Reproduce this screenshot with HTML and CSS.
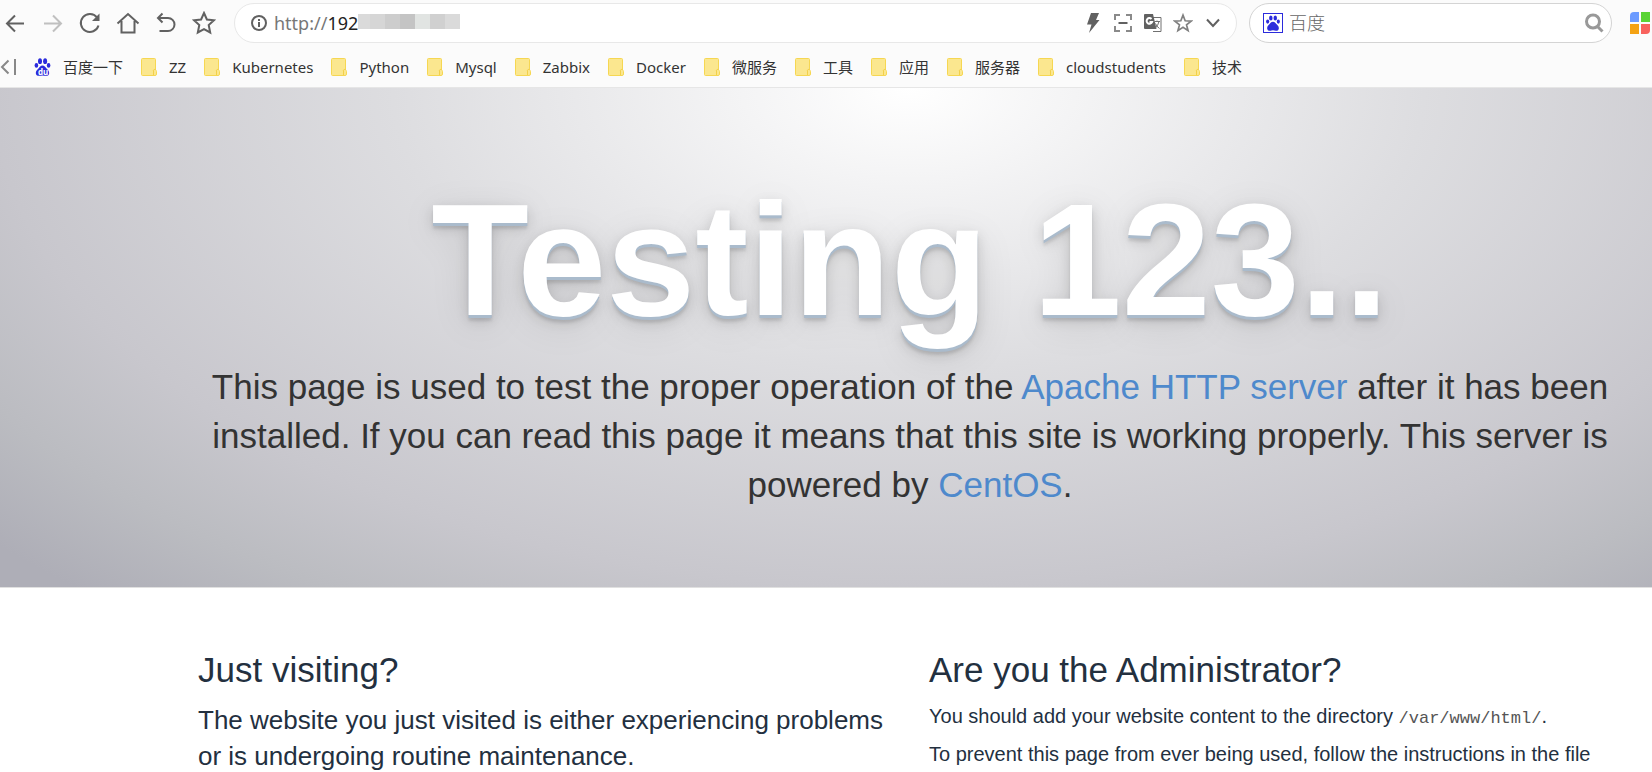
FILE: index.html
```html
<!DOCTYPE html>
<html lang="en">
<head>
<meta charset="utf-8">
<title>Apache HTTP Server Test Page powered by CentOS</title>
<link rel="stylesheet" href="styles.css">
</head>
<body>
<svg class="defs" aria-hidden="true">
  <symbol id="folder" viewBox="0 0 16 18"><path d="M.5 1.500a1 1 0 0 1 1-1h12a1 1 0 0 1 1 1v10.500a1.500 1.500 0 0 1 1 1.500v2.500a1.500 1.500 0 0 1-1.500 1.500H1.500a1 1 0 0 1-1-1z" fill="#fbe78f" stroke="#f6d752"/><path d="M12.500 17v-4a1 1 0 0 1 2-1" fill="none" stroke="#f3d04a"/></symbol>
  <symbol id="paw" viewBox="0 0 16 18"><g fill="currentColor"><ellipse cx="5.500" cy="3.200" rx="2" ry="2.900"/><ellipse cx="10.600" cy="3.200" rx="2" ry="2.900"/><ellipse cx="1.900" cy="7.400" rx="1.800" ry="2.400"/><ellipse cx="14.100" cy="7.400" rx="1.800" ry="2.400"/><path d="M8 7.500c2 0 2.800 1.500 3.800 2.700 1.200 1.300 2.900 2.400 2.900 4.700 0 2-1.500 3-3.400 2.900-1.200-.1-2.100-.4-3.300-.4s-2.100.3-3.300.4c-1.900.1-3.400-.9-3.400-2.900 0-2.300 1.700-3.400 2.900-4.700C5.200 9 6 7.500 8 7.500z"/></g></symbol>
</svg>
<header class="chrome">
  <div class="toolbar">
    <nav class="controls" aria-label="Navigation">
      <button class="tool" aria-label="Back"><svg width="24" height="24" viewBox="0 0 24 24"><path d="M22 12.500H6M13 4.500l-8 8 8 8"/></svg></button>
      <button class="tool faded" aria-label="Forward"><svg width="24" height="24" viewBox="0 0 24 24"><path d="M4 12.500h16M13 4.500l8 8-8 8"/></svg></button>
      <button class="tool" aria-label="Reload"><svg width="24" height="24" viewBox="0 0 24 24"><path d="M19 6.500A9 9 0 1 0 20.500 14.500"/><path class="head" d="M21.500 2.500V10H14z"/></svg></button>
      <button class="tool" aria-label="Home"><svg width="24" height="24" viewBox="0 0 24 24"><path d="M1.500 12.500 12 3l10.500 9.500M5.500 10v11.500h13V10"/></svg></button>
      <button class="tool" aria-label="Restore"><svg width="24" height="24" viewBox="0 0 24 24"><path d="M8.500 2.500 4 7l4.500 4.500M4 7h10a6.500 6.500 0 0 1 0 13H5.500"/></svg></button>
      <button class="tool" aria-label="Favorites"><svg width="24" height="24" viewBox="0 0 24 24"><path d="m12 2 2.900 6.500 7 .8-5.200 4.700 1.500 7.500L12 18.100l-6.200 3.400L7.300 14 2.100 9.300l7-.8z"/></svg></button>
    </nav>
    <div class="address">
      <svg width="18" height="18" viewBox="0 0 18 18" class="info"><circle cx="9" cy="9" r="7"/><path d="M9 8v5M9 5v2"/></svg>
      <label class="url"><span class="scheme">http://</span><input value="192" aria-label="Address"></label>
      <span class="mask" aria-hidden="true"><i class="m1"></i><i class="m2"></i><i class="m3"></i><i class="m4"></i><i class="m5"></i><i class="m6"></i><i class="m7"></i></span>
      <div class="actions">
        <button aria-label="Speed mode"><svg width="20" height="20" viewBox="0 0 20 20"><path class="solid" d="M8 0h8l-3 7h3.500L6 20l2.500-8.500H4z"/></svg></button>
        <button aria-label="Screenshot"><svg width="20" height="20" viewBox="0 0 20 20"><path class="thin" d="M2 7V2h5M13 2h5v5M18 13v5h-5M7 18H2v-5"/><path d="M5.500 10h9"/></svg></button>
        <button aria-label="Translate"><svg width="20" height="20" viewBox="0 0 20 20"><path d="M8 4.500h10v14h-8" class="hair"/><path class="solid" d="M2 1h8l3.500 15H2a1 1 0 0 1-1-1V2a1 1 0 0 1 1-1z"/><path d="M8.500 6A2.800 2.800 0 1 0 9 9H6.500" stroke="#fff" class="line"/><path class="hair" d="M11.500 8.500H17M14 7.500v1M16 8.500q-1 4.500-4 7M12.500 10.500q1 3 4 5"/></svg></button>
        <button aria-label="Bookmark"><svg width="20" height="20" viewBox="0 0 24 24"><path d="m12 2.500 2.600 6.800 7.200.4-5.600 4.500 1.900 7L12 17.200l-6.100 4 1.900-7-5.600-4.500 7.200-.4z" class="star"/></svg></button>
        <button aria-label="More"><svg width="20" height="20" viewBox="0 0 20 20"><path d="m4 6.500 6 6.500 6-6.500"/></svg></button>
      </div>
    </div>
    <div class="search">
      <span class="engine"><svg width="14" height="16"><use href="#paw"/></svg></span>
      <input placeholder="百度" aria-label="Search">
      <button aria-label="Search"><svg width="20" height="20" viewBox="0 0 20 20"><circle cx="9" cy="8.500" r="6.500"/><path d="m13.500 13.500 5 5"/></svg></button>
    </div>
    <button class="apps" aria-label="Extensions"><i class="blue"></i><i class="green"></i><i class="orange"></i><i class="red"></i></button>
  </div>
  <nav class="bookmarks" aria-label="Bookmarks">
    <button class="collapse" aria-label="Collapse bookmarks"><svg width="16" height="18" viewBox="0 0 16 18"><path d="M8.500 2.500 2 9l6.500 6.500M15 1v16"/></svg></button>
    <a href="#"><span class="baidu"><svg width="17" height="18" viewBox="0 0 17 18"><use href="#paw" width="17" height="18"/></svg><b>du</b></span>百度一下</a>
    <a href="#"><svg width="16" height="18"><use href="#folder"/></svg>ZZ</a>
    <a href="#"><svg width="16" height="18"><use href="#folder"/></svg>Kubernetes</a>
    <a href="#"><svg width="16" height="18"><use href="#folder"/></svg>Python</a>
    <a href="#"><svg width="16" height="18"><use href="#folder"/></svg>Mysql</a>
    <a href="#"><svg width="16" height="18"><use href="#folder"/></svg>Zabbix</a>
    <a href="#"><svg width="16" height="18"><use href="#folder"/></svg>Docker</a>
    <a href="#"><svg width="16" height="18"><use href="#folder"/></svg>微服务</a>
    <a href="#"><svg width="16" height="18"><use href="#folder"/></svg>工具</a>
    <a href="#"><svg width="16" height="18"><use href="#folder"/></svg>应用</a>
    <a href="#"><svg width="16" height="18"><use href="#folder"/></svg>服务器</a>
    <a href="#"><svg width="16" height="18"><use href="#folder"/></svg>cloudstudents</a>
    <a href="#"><svg width="16" height="18"><use href="#folder"/></svg>技术</a>
  </nav>
</header>
<main>
  <section class="hero">
    <div class="container">
      <h1>Testing 123..</h1>
      <p>This page is used to test the proper operation of the <a href="#">Apache HTTP server</a> after it has been installed. If you can read this page it means that this site is working properly. This server is powered by <a href="#">CentOS</a>.</p>
    </div>
  </section>
  <section class="container columns">
    <article>
      <h2>Just visiting?</h2>
      <p class="lead">The website you just visited is either experiencing problems or is undergoing routine maintenance.</p>
    </article>
    <article>
      <h2>Are you the Administrator?</h2>
      <p>You should add your website content to the directory <code>/var/www/html/</code>.</p>
      <p>To prevent this page from ever being used, follow the instructions in the file</p>
    </article>
  </section>
</main>
</body>
</html>
```
FILE: styles.css
```css
* { box-sizing: border-box; }
body { margin: 0; background: #fff; color: #23303f; font-family: "Liberation Sans", Arial, sans-serif; }
a { text-decoration: none; }
button { padding: 0; border: 0; background: none; display: flex; flex: none; }
input { min-width: 0; padding: 0; border: 0; background: none; outline: 0; font: inherit; color: inherit; }
svg { display: block; flex: none; fill: none; stroke: #616161; stroke-width: 2; }
.defs { position: absolute; width: 0; height: 0; }
symbol { stroke-width: 1; }

.chrome { background: #fbfbfb; border-bottom: 1px solid #e6e6e6; font-family: "Noto Sans", "Noto Sans CJK SC", sans-serif; }
.toolbar { display: flex; align-items: center; height: 46px; padding: 0 2px; }
.controls { display: flex; gap: 14px; width: 232px; flex: none; }
.tool .head { fill: #616161; stroke: none; }
.faded svg { stroke: #c0c0c0; }
.address, .search { display: flex; align-items: center; height: 40px; border-radius: 20px; background: #fff; }
.address { flex: 1; border: 1px solid #e8e8e8; padding: 0 13px 0 15px; }
.url { display: flex; align-items: center; margin-left: 6px; font-size: 18px; }
.url input { width: 31px; color: #222; }
.scheme { color: #777; }
.mask { display: flex; height: 15px; margin-bottom: 4px; }
.mask i { width: 15px; }
.mask .m1 { width: 12px; background: #dadada; }
.m2 { background: #d6d6d6; }
.m3 { background: #cdcdcd; }
.m4 { background: #c4c4c4; }
.m5 { background: #e1e4e2; }
.m6 { background: #d0d0d0; }
.m7 { background: #dadada; }
.actions { display: flex; gap: 10px; margin-left: auto; }
.actions .solid { fill: #616161; stroke: none; }
.actions .thin { stroke: #8a8a8a; }
.actions .hair { stroke: #707070; stroke-width: 1; }
.actions .line { stroke-width: 2; }
.actions .star { stroke: #808080; stroke-width: 2; }
.search { width: 363px; flex: none; margin-left: 12px; padding: 0 7px 0 13px; border: 1px solid #d4d4d4; }
.search input { flex: 1; margin-left: 6px; font-size: 18px; font-weight: 300; }
.search input::placeholder { color: #666; opacity: 1; }
.search button svg { stroke: #999; stroke-width: 3; }
.engine { display: flex; align-items: center; justify-content: center; width: 20px; height: 20px; border: 1px solid #2b2bdc; color: #2b2bdc; }
.engine svg, .baidu svg { stroke: none; }
.apps { display: grid; grid-template-columns: 9px 9px; gap: 2px; margin-left: 18px; }
.apps i { height: 10px; }
.apps .blue { background: #6c9bff; border-top-left-radius: 4px; }
.apps .green { background: #5ad435; }
.apps .orange { background: #f4a214; }
.apps .red { background: #f8625d; border-bottom-right-radius: 4px; }

.bookmarks { display: flex; align-items: center; height: 41px; gap: 18px; }
.bookmarks a { display: flex; align-items: center; gap: 12px; color: #333; font-size: 15px; white-space: nowrap; }
.bookmarks a svg { stroke: none; }
.collapse svg { stroke: #888; }
.baidu { display: flex; position: relative; color: #2b2bdc; }
.baidu b { position: absolute; left: 4px; bottom: 0; color: #fff; font-size: 8px; line-height: 8px; }

.container { max-width: 1462px; margin: 0 11px 0 auto; padding: 0 19px; }
.hero { padding: 84px 0 78px; background: radial-gradient(78% 141% at 55% 0, #fff 0%, #dddde0 40%, #c8c7cd 71%, #bbbcc1 84%, #aeaeb7 96%); border-bottom: 1px solid #e0e0e0; text-align: center; }
.hero h1 { margin: 0; color: #fff; font-size: 160px; line-height: 176px; text-shadow: 0 3px 0 #abc, 0 5px 13px rgba(0,0,0,.15), 0 6px 3px rgba(0,0,0,.1), 0 8px 38px rgba(0,0,0,.1); }
.hero p { margin: 14px 0 0; color: #333; font-size: 35px; line-height: 49px; }
.hero a { color: #4e89cc; }
.columns { display: grid; grid-template-columns: 1fr 1fr; gap: 38px; padding-top: 62px; }
.columns h2 { margin: 0 0 12px; font-size: 35px; font-weight: 400; line-height: 40px; }
.columns p { margin: 0; font-size: 20px; line-height: 28px; }
.columns p + p { margin-top: 10px; }
.columns .lead { font-size: 26px; line-height: 36px; }
code { font-family: "Liberation Mono", monospace; font-size: 17px; line-height: 20px; color: #555; }
```
